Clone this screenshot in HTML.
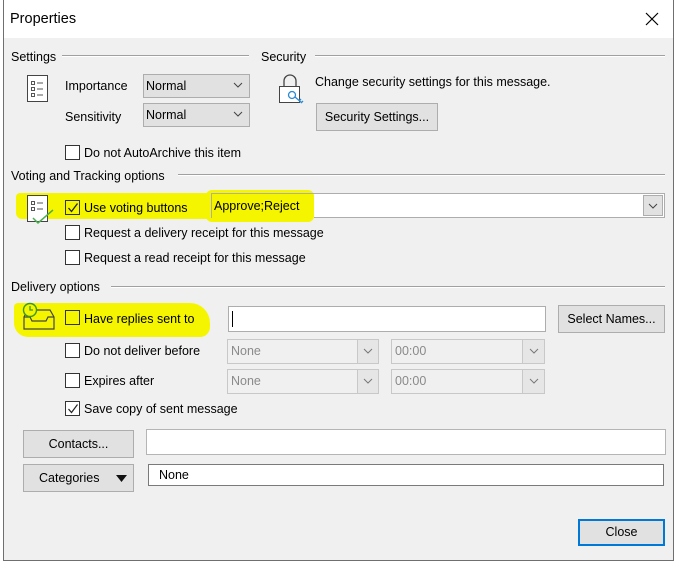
<!DOCTYPE html>
<html><head><meta charset="utf-8"><style>
*{box-sizing:border-box;margin:0;padding:0}
body{width:676px;height:562px;background:#fff;position:relative;overflow:hidden;font-family:"Liberation Sans",sans-serif;font-size:12.5px;color:#000}
.a{position:absolute}
.t{position:absolute;white-space:nowrap;line-height:16px}
.win{left:3px;top:0;width:671px;height:561px;border:1px solid #6f6f6f;border-top:none;background:#f0f0f0}
.line{position:absolute;height:2px;border-top:1px solid #a0a0a0;border-bottom:1px solid #fff}
.cb{position:absolute;width:15px;height:15px;border:1px solid #333;background:#fff}
.dd{position:absolute;background:#e1e1e1;border:1px solid #adadad}
.btn{position:absolute;background:#e1e1e1;border:1px solid #adadad;text-align:center}
.hl{position:absolute;background:#f5f500}
.dis{position:absolute;background:#f0f0f0;border:1px solid #c8c8c8;color:#888}
.arr{position:absolute;background:#e6e6e6;border:1px solid #c8c8c8}
</style></head><body>
<div class="a win"></div>
<div class="a" style="left:4px;top:0;width:669px;height:38px;background:#fff"></div>
<div class="t" style="left:10px;top:11px;font-size:14.5px">Properties</div>
<svg class="a" style="left:645px;top:12px" width="14" height="14"><path d="M1 1L13 13M13 1L1 13" stroke="#000" stroke-width="1.2"/></svg>

<div class="t" style="left:11px;top:49px">Settings</div>
<div class="line" style="left:62px;top:55px;width:187px"></div>
<div class="t" style="left:261px;top:49px">Security</div>
<div class="line" style="left:315px;top:55px;width:350px"></div>

<svg class="a" style="left:26px;top:74px" width="24" height="30"><rect x="1.5" y="1.5" width="20" height="26" fill="#fff" stroke="#444"/><g stroke="#555" fill="none"><rect x="5.5" y="7.5" width="3" height="3"/><rect x="5.5" y="13.5" width="3" height="3"/><rect x="5.5" y="19.5" width="3" height="3"/><path d="M11 9h6M11 15h6M11 21h6"/></g></svg>
<div class="t" style="left:65px;top:78px">Importance</div>
<div class="dd" style="left:143px;top:74px;width:107px;height:24px"></div>
<div class="t" style="left:146px;top:78px">Normal</div>
<svg class="a" style="left:233px;top:82px" width="10" height="6"><path d="M1 1l4 4 4-4" stroke="#444" fill="none"/></svg>
<div class="t" style="left:65px;top:109px">Sensitivity</div>
<div class="dd" style="left:143px;top:103px;width:107px;height:24px"></div>
<div class="t" style="left:146px;top:107px">Normal</div>
<svg class="a" style="left:233px;top:111px" width="10" height="6"><path d="M1 1l4 4 4-4" stroke="#444" fill="none"/></svg>
<div class="cb" style="left:65px;top:145px"></div>
<div class="t" style="left:84px;top:145px">Do not AutoArchive this item</div>

<svg class="a" style="left:276px;top:72px" width="30" height="34"><path d="M8 14V9a6 6 0 0 1 12 0v5" stroke="#444" fill="none" stroke-width="1.3"/><rect x="3.5" y="14.5" width="20" height="16" fill="#fff" stroke="#444"/><circle cx="16" cy="23" r="3.5" fill="#fff" stroke="#2a8ad4" stroke-width="1.3"/><path d="M19 25l7 6M23 29l2-2M25 31l2-2" stroke="#2a8ad4" stroke-width="1.3"/></svg>
<div class="t" style="left:315px;top:74px">Change security settings for this message.</div>
<div class="btn" style="left:316px;top:103px;width:122px;height:28px;line-height:26px">Security Settings...</div>

<div class="t" style="left:11px;top:168px">Voting and Tracking options</div>
<div class="line" style="left:178px;top:174px;width:487px"></div>

<div class="hl" style="left:16px;top:193px;width:298px;height:26px;border-radius:4px 12px 10px 6px"></div>
<div class="hl" style="left:206px;top:190px;width:108px;height:32px;border-radius:6px"></div>
<svg class="a" style="left:26px;top:194px" width="30" height="32"><rect x="1.5" y="1.5" width="20" height="26" fill="#fff" stroke="#444"/><g stroke="#555" fill="none"><rect x="5.5" y="7.5" width="3" height="3"/><rect x="5.5" y="13.5" width="3" height="3"/><path d="M11 9h6M11 15h6"/></g><path d="M7 24l5 5 15-13" stroke="#4caf50" stroke-width="1.5" fill="none"/></svg>
<div class="cb" style="left:65px;top:200px;background:transparent"></div>
<svg class="a" style="left:67px;top:202px" width="12" height="12"><path d="M1.5 6l3 3.5 6-8" stroke="#222" stroke-width="1.3" fill="none"/></svg>
<div class="t" style="left:84px;top:200px">Use voting buttons</div>
<div class="a" style="left:314px;top:193px;width:351px;height:25px;background:#fff;border:1px solid #adadad;border-left:none"></div>
<div class="a" style="left:211px;top:193px;width:103px;height:25px;border-top:1px solid #adadad;border-left:1px solid #adadad"></div>
<div class="t" style="left:214px;top:198px">Approve;Reject</div>
<div class="arr" style="left:643px;top:195px;width:20px;height:21px;background:#e1e1e1;border-color:#adadad"></div>
<svg class="a" style="left:648px;top:203px" width="10" height="6"><path d="M1 1l4 4 4-4" stroke="#444" fill="none"/></svg>

<div class="cb" style="left:65px;top:225px"></div>
<div class="t" style="left:84px;top:225px">Request a delivery receipt for this message</div>
<div class="cb" style="left:65px;top:250px"></div>
<div class="t" style="left:84px;top:250px">Request a read receipt for this message</div>

<div class="t" style="left:11px;top:279px">Delivery options</div>
<div class="line" style="left:111px;top:286px;width:554px"></div>

<div class="hl" style="left:14px;top:303px;width:196px;height:34px;border-radius:4px 20px 10px 14px"></div>
<svg class="a" style="left:20px;top:302px" width="36" height="30"><path d="M14 8H30L34 15V27H4V15L6 11" stroke="#444" fill="none" stroke-width="1.2"/><path d="M4 15H10L12 19H26L28 15H34" stroke="#444" fill="none" stroke-width="1.2"/><circle cx="10" cy="8" r="6.5" fill="#f5f500" stroke="#3a9a1a" stroke-width="1.4"/><path d="M10 4v4h3" stroke="#3a9a1a" stroke-width="1.3" fill="none"/></svg>
<div class="cb" style="left:65px;top:310px;background:transparent"></div>
<div class="t" style="left:84px;top:311px">Have replies sent to</div>
<div class="a" style="left:228px;top:306px;width:318px;height:26px;background:#fff;border:1px solid #adadad"></div>
<div class="a" style="left:232px;top:311px;width:1px;height:16px;background:#000"></div>
<div class="btn" style="left:558px;top:305px;width:107px;height:28px;line-height:26px">Select Names...</div>

<div class="cb" style="left:65px;top:343px"></div>
<div class="t" style="left:84px;top:343px">Do not deliver before</div>
<div class="dis" style="left:227px;top:339px;width:131px;height:25px"></div><div class="t" style="left:231px;top:343px;color:#8a8a8a">None</div>
<div class="arr" style="left:357px;top:339px;width:22px;height:25px"></div>
<svg class="a" style="left:363px;top:348px" width="10" height="6"><path d="M1 1l4 4 4-4" stroke="#777" fill="none"/></svg>
<div class="dis" style="left:391px;top:339px;width:132px;height:25px"></div><div class="t" style="left:395px;top:343px;color:#8a8a8a">00:00</div>
<div class="arr" style="left:522px;top:339px;width:23px;height:25px"></div>
<svg class="a" style="left:529px;top:348px" width="10" height="6"><path d="M1 1l4 4 4-4" stroke="#777" fill="none"/></svg>

<div class="cb" style="left:65px;top:373px"></div>
<div class="t" style="left:84px;top:373px">Expires after</div>
<div class="dis" style="left:227px;top:369px;width:131px;height:25px"></div><div class="t" style="left:231px;top:373px;color:#8a8a8a">None</div>
<div class="arr" style="left:357px;top:369px;width:22px;height:25px"></div>
<svg class="a" style="left:363px;top:378px" width="10" height="6"><path d="M1 1l4 4 4-4" stroke="#777" fill="none"/></svg>
<div class="dis" style="left:391px;top:369px;width:132px;height:25px"></div><div class="t" style="left:395px;top:373px;color:#8a8a8a">00:00</div>
<div class="arr" style="left:522px;top:369px;width:23px;height:25px"></div>
<svg class="a" style="left:529px;top:378px" width="10" height="6"><path d="M1 1l4 4 4-4" stroke="#777" fill="none"/></svg>

<div class="cb" style="left:65px;top:401px"></div>
<svg class="a" style="left:67px;top:403px" width="12" height="12"><path d="M1.5 6l3 3.5 6-8" stroke="#222" stroke-width="1.2" fill="none"/></svg>
<div class="t" style="left:84px;top:401px">Save copy of sent message</div>

<div class="btn" style="left:23px;top:430px;width:111px;height:28px;line-height:26px">Contacts...</div>
<div class="a" style="left:146px;top:429px;width:520px;height:26px;background:#fff;border:1px solid #b5b5b5"></div>
<div class="btn" style="left:23px;top:464px;width:111px;height:28px;line-height:26px;text-align:left;padding-left:15px">Categories</div>
<svg class="a" style="left:116px;top:475px" width="11" height="7"><path d="M0 0h11L5.5 7z" fill="#111"/></svg>
<div class="a" style="left:148px;top:464px;width:516px;height:22px;background:#fff;border:1px solid #7a7a7a"></div>
<div class="t" style="left:159px;top:467px">None</div>

<div class="btn" style="left:578px;top:519px;width:87px;height:27px;line-height:23px;border:2px solid #0078d7">Close</div>
</body></html>
